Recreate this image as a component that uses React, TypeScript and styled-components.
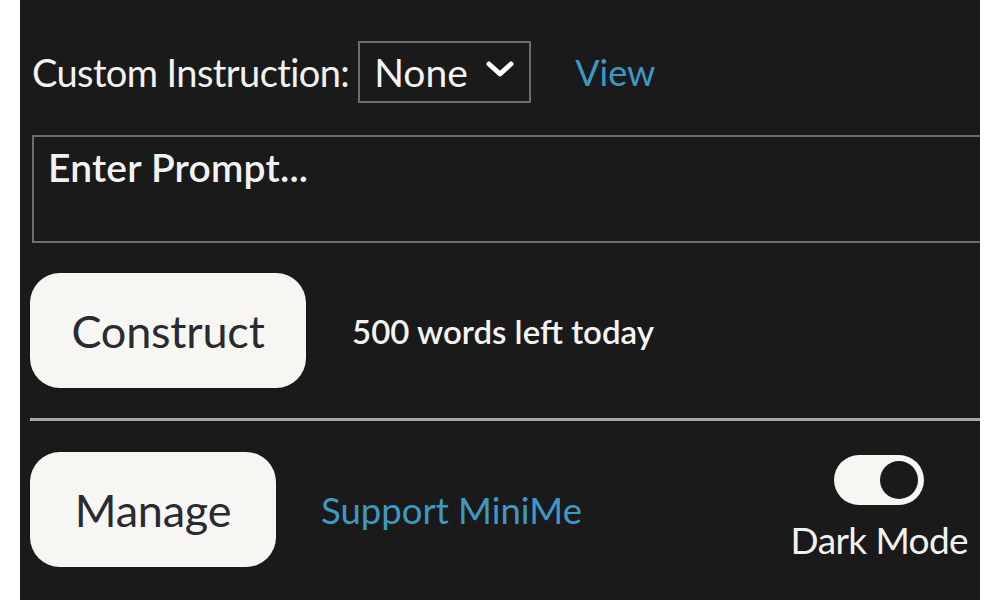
import React, { useState } from "react";
import styled, { createGlobalStyle } from "styled-components";

const GlobalStyle = createGlobalStyle`
  html, body {
    margin: 0;
    padding: 0;
    background: #ffffff;
    font-family: Lato, "Open Sans", "Liberation Sans", sans-serif;
  }
  * { box-sizing: border-box; }
`;

const Panel = styled.div`
  margin: 0 20px;
  width: 960px;
  height: 600px;
  background: #1a1a1a;
  overflow: hidden;
  padding: 41px 12px 0 10px;
  display: flex;
  flex-direction: column;
  gap: 30px;
  color: #f2f2f2;
`;

const InstructionRow = styled.div`
  display: flex;
  align-items: center;
  height: 62px;
  padding-left: 2px;
`;

const Label = styled.span`
  font-size: 38px;
  letter-spacing: -0.6px;
  color: #f2f2f2;
  margin-right: 9px;
`;

const SelectBox = styled.div`
  display: flex;
  align-items: center;
  justify-content: space-between;
  width: 173px;
  height: 62px;
  border: 2px solid #6c6c6c;
  padding: 0 15px 0 14px;
  font-size: 39px;
  color: #f4f4f4;
`;

const Chevron = styled.svg`
  width: 28px;
  height: 20px;
  margin-top: -6px;
`;

const Link = styled.a<{ $size: number }>`
  font-size: ${(p) => p.$size}px;
  color: #3f98c4;
  text-decoration: none;
  cursor: pointer;
`;

const ViewLink = styled(Link)`
  margin-left: 44px;
`;

const PromptArea = styled.textarea`
  display: block;
  width: 1000px;
  height: 108px;
  margin: 2px 0 0 2px;
  background: #1a1a1a;
  border: 2px solid #6c6c6c;
  padding: 9px 14px;
  font-family: inherit;
  font-size: 39px;
  font-weight: 600;
  letter-spacing: 0.2px;
  line-height: 1.1;
  color: #f2f2f2;
  resize: none;
  outline: none;
  &::placeholder {
    color: #f2f2f2;
    opacity: 1;
  }
`;

const ActionRow = styled.div`
  display: flex;
  align-items: center;
  gap: 46px;
`;

const PillButton = styled.button<{ $width: number }>`
  width: ${(p) => p.$width}px;
  height: 115px;
  border: none;
  border-radius: 30px;
  background: #f8f6f2;
  color: #2a2a33;
  font-family: inherit;
  font-size: 45px;
  letter-spacing: -0.2px;
  cursor: pointer;
  padding: 0;
`;

const Quota = styled.span`
  font-size: 33px;
  font-weight: 600;
  letter-spacing: 0;
  color: #f4f4f4;
`;

const Divider = styled.hr`
  margin: 0;
  border: none;
  height: 3px;
  width: 960px;
  background: #a8a8a8;
`;

const FooterRow = styled.div`
  display: flex;
  align-items: flex-start;
  margin-top: 1px;
`;

const FooterLeft = styled.div`
  display: flex;
  align-items: center;
  gap: 45px;
  flex: 1;
`;

const ToggleColumn = styled.div`
  display: flex;
  flex-direction: column;
  align-items: center;
  padding-top: 3px;
`;

const ToggleTrack = styled.button<{ $on: boolean }>`
  width: 90px;
  height: 50px;
  border-radius: 25px;
  border: none;
  background: #f8f6f2;
  padding: 0 6px;
  display: flex;
  align-items: center;
  justify-content: ${(p) => (p.$on ? "flex-end" : "flex-start")};
  cursor: pointer;
`;

const ToggleKnob = styled.span`
  width: 38px;
  height: 38px;
  border-radius: 50%;
  background: #1a1a1a;
`;

const ToggleLabel = styled.span`
  font-size: 37px;
  letter-spacing: -0.6px;
  line-height: 1;
  margin-top: 16px;
  color: #f2f2f2;
`;

export default function App() {
  const [dark, setDark] = useState(true);
  return (
    <>
      <GlobalStyle />
      <Panel>
        <InstructionRow>
          <Label>Custom Instruction:</Label>
          <SelectBox>
            <span>None</span>
            <Chevron viewBox="0 0 28 20">
              <polyline
                points="3,5 14,15 25,5"
                fill="none"
                stroke="#ffffff"
                strokeWidth="5"
                strokeLinecap="round"
                strokeLinejoin="round"
              />
            </Chevron>
          </SelectBox>
          <ViewLink $size={36}>View</ViewLink>
        </InstructionRow>
        <PromptArea placeholder="Enter Prompt..." />
        <ActionRow>
          <PillButton $width={276}>Construct</PillButton>
          <Quota>500 words left today</Quota>
        </ActionRow>
        <Divider />
        <FooterRow>
          <FooterLeft>
            <PillButton $width={246}>Manage</PillButton>
            <Link $size={36.5}>Support MiniMe</Link>
          </FooterLeft>
          <ToggleColumn>
            <ToggleTrack $on={dark} onClick={() => setDark(!dark)} aria-label="Dark Mode">
              <ToggleKnob />
            </ToggleTrack>
            <ToggleLabel>Dark Mode</ToggleLabel>
          </ToggleColumn>
        </FooterRow>
      </Panel>
    </>
  );
}
